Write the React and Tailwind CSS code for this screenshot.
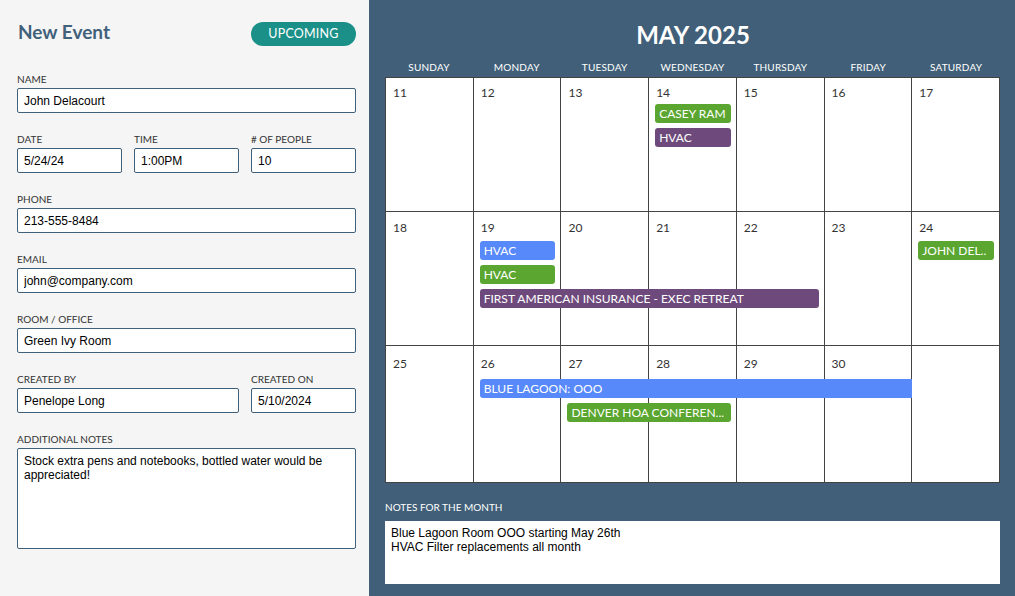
import React from 'react';

const sans = "font-['Lato','Noto_Sans',sans-serif]";
const arial = "font-['Liberation_Sans',Arial,sans-serif]";

const Field = ({ label, value, className = '' }) => (
  <div className={className}>
    <p className={`${sans} text-[10px] leading-[12px] text-[#333] uppercase mb-[3px]`}>{label}</p>
    <input
      readOnly
      value={value}
      className={`${arial} block w-full h-[25px] px-[6px] text-[12px] text-black bg-white border border-[#41607a] rounded-[2px] outline-none`}
    />
  </div>
);

const weekdays = ['Sunday', 'Monday', 'Tuesday', 'Wednesday', 'Thursday', 'Friday', 'Saturday'];

const colors = {
  green: 'bg-[#5aa630]',
  purple: 'bg-[#6e4a7c]',
  blue: 'bg-[#5789fb]',
};

const weeks = [
  {
    days: [11, 12, 13, 14, 15, 16, 17],
    height: 'h-[134px]',
    numTop: 'pt-[7px]',
    eventsTop: 'top-[26px]',
    events: [
      { label: 'CASEY RAM', color: 'green', pos: 'col-start-4 col-span-1 row-start-1', edge: 'mx-[6px] rounded-[3px]' },
      { label: 'HVAC', color: 'purple', pos: 'col-start-4 col-span-1 row-start-2', edge: 'mx-[6px] rounded-[3px]' },
    ],
  },
  {
    days: [18, 19, 20, 21, 22, 23, 24],
    height: 'h-[134px]',
    numTop: 'pt-[8px]',
    eventsTop: 'top-[29px]',
    events: [
      { label: 'HVAC', color: 'blue', pos: 'col-start-2 col-span-1 row-start-1', edge: 'mx-[6px] rounded-[3px]' },
      { label: 'HVAC', color: 'green', pos: 'col-start-2 col-span-1 row-start-2', edge: 'mx-[6px] rounded-[3px]' },
      { label: 'FIRST AMERICAN INSURANCE - EXEC RETREAT', color: 'purple', pos: 'col-start-2 col-span-4 row-start-3', edge: 'mx-[6px] rounded-[3px]' },
      { label: 'JOHN DEL..', color: 'green', pos: 'col-start-7 col-span-1 row-start-1', edge: 'mx-[6px] rounded-[3px]' },
    ],
  },
  {
    days: [25, 26, 27, 28, 29, 30, null],
    height: 'h-[137px]',
    numTop: 'pt-[10px]',
    eventsTop: 'top-[33px]',
    events: [
      { label: 'BLUE LAGOON: OOO', color: 'blue', pos: 'col-start-2 col-span-5 row-start-1', edge: 'ml-[6px] rounded-l-[3px]' },
      { label: 'DENVER HOA CONFEREN...', color: 'green', pos: 'col-start-3 col-span-2 row-start-2', edge: 'mx-[6px] rounded-[3px]' },
    ],
  },
];

const Week = ({ week }) => (
  <div className="relative grid grid-cols-7">
    {week.days.map((d, i) => (
      <div key={i} className={`${week.height} border-r border-b border-[#444] bg-white px-[7px] ${week.numTop}`}>
        <span className={`${sans} block text-[12px] leading-[16px] text-[#333]`}>{d}</span>
      </div>
    ))}
    <div className={`absolute inset-x-0 ${week.eventsTop} grid grid-cols-7 auto-rows-[19px] gap-y-[5px]`}>
      {week.events.map((e, i) => (
        <div
          key={i}
          className={`${e.pos} ${e.edge} ${colors[e.color]} ${sans} text-white text-[12px] leading-[19px] pl-[4px] whitespace-nowrap overflow-hidden`}
        >
          {e.label}
        </div>
      ))}
    </div>
  </div>
);

export default function App() {
  return (
    <div className="w-[1015px] h-[596px] flex overflow-hidden">
      {/* Event form */}
      <div className="w-[369px] shrink-0 bg-[#f5f5f5] pl-[17px] pr-[13px] pt-[22px]">
        <div className="flex items-center justify-between h-[24px] mb-[27px]">
          <h1 className={`${sans} pl-[1px] -mt-[4px] text-[19px] font-bold text-[#41607a]`}>New Event</h1>
          <span className={`${sans} w-[105px] h-[24px] flex items-center justify-center rounded-full bg-[#1b9088] text-white text-[12.5px] tracking-[0.2px]`}>
            UPCOMING
          </span>
        </div>
        <div className="flex flex-col gap-5">
          <Field label="Name" value="John Delacourt" />
          <div className="grid grid-cols-3 gap-x-3">
            <Field label="Date" value="5/24/24" />
            <Field label="Time" value="1:00PM" />
            <Field label="# of People" value="10" />
          </div>
          <Field label="Phone" value="213-555-8484" />
          <Field label="Email" value="john@company.com" />
          <Field label="Room / Office" value="Green Ivy Room" />
          <div className="grid grid-cols-3 gap-x-3">
            <Field label="Created By" value="Penelope Long" className="col-span-2" />
            <Field label="Created On" value="5/10/2024" />
          </div>
          <div>
            <p className={`${sans} text-[10px] leading-[12px] text-[#333] uppercase mb-[3px]`}>Additional Notes</p>
            <textarea
              readOnly
              value="Stock extra pens and notebooks, bottled water would be appreciated!"
              className={`${arial} block w-full h-[101px] px-[6px] pt-[5px] text-[12px] leading-[14px] text-black bg-white border border-[#41607a] rounded-[2px] outline-none resize-none`}
            />
          </div>
        </div>
      </div>

      {/* Calendar */}
      <div className="flex-1 bg-[#415f78] pl-[16px] pr-[15px] pt-[19px]">
        <h2 className={`${sans} text-center text-white text-[24px] leading-[32px] font-bold pl-[1px]`}>MAY 2025</h2>
        <div className="grid grid-cols-7 mt-[10px] mb-[4px]">
          {weekdays.map(w => (
            <p key={w} className={`${sans} text-center text-white text-[10px] leading-[12px] uppercase tracking-[0.2px]`}>{w}</p>
          ))}
        </div>
        <div className="border-l border-t border-[#444]">
          {weeks.map((w, i) => <Week key={i} week={w} />)}
        </div>
        <p className={`${sans} mt-[18px] mb-[8px] text-white text-[10px] leading-[12px] uppercase`}>Notes for the month</p>
        <div className={`${arial} h-[63px] bg-white px-[6px] pt-[5px] text-[12px] leading-[14px] text-black`}>
          <p>Blue Lagoon Room OOO starting May 26th</p>
          <p>HVAC Filter replacements all month</p>
        </div>
      </div>
    </div>
  );
}
